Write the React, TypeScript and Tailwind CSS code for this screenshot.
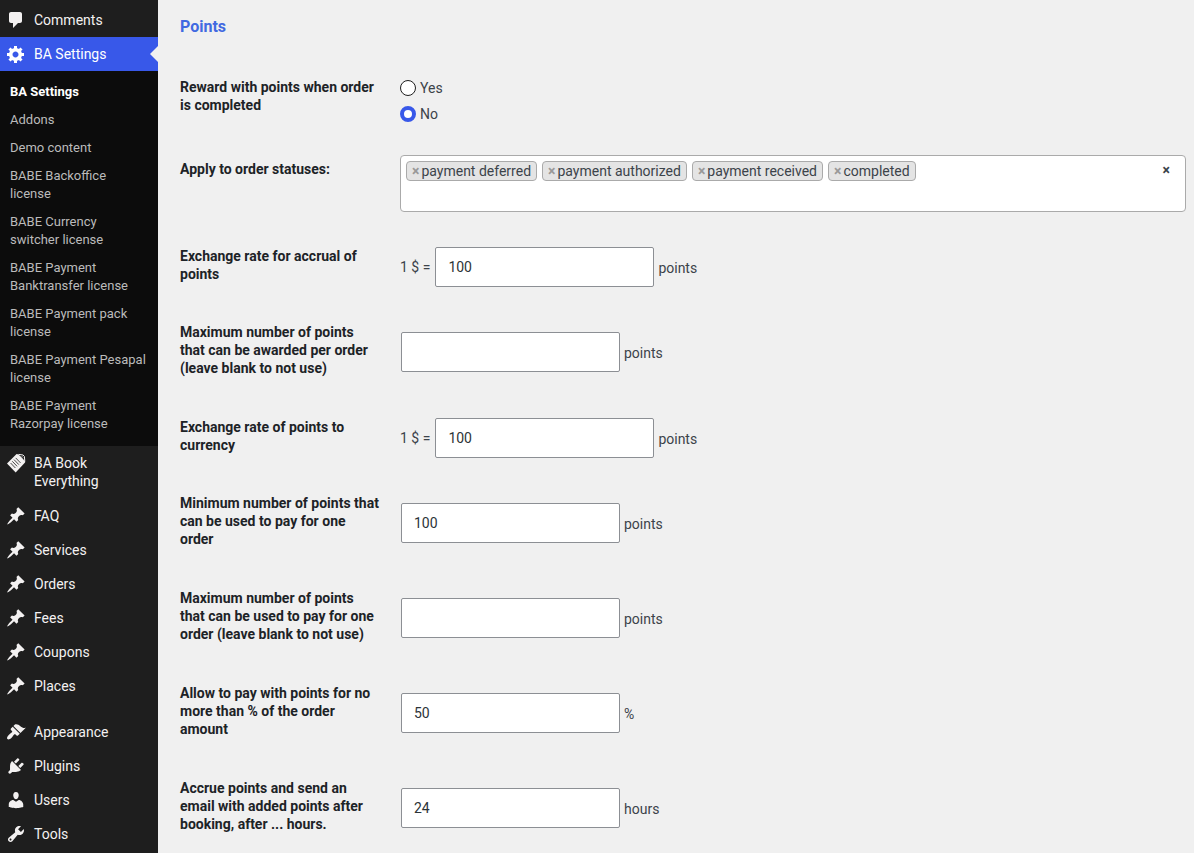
import { useState } from 'react';
import type { ReactNode } from 'react';
import clsx from 'clsx';

const ICONS = {
  comments: 'M5 2h9c1.1 0 2 .9 2 2v7c0 1.1-.9 2-2 2h-2l-5 5v-5H5c-1.1 0-2-.9-2-2V4c0-1.1.9-2 2-2z',
  generic:
    'M18 12h-2.18c-.17.7-.44 1.35-.81 1.93l1.54 1.54-2.1 2.1-1.54-1.54c-.58.36-1.23.63-1.91.79V19H8v-2.18c-.68-.16-1.33-.43-1.91-.79l-1.54 1.54-2.12-2.12 1.54-1.54c-.36-.58-.63-1.23-.79-1.91H1V9.03h2.17c.16-.7.44-1.35.8-1.94L2.43 5.55l2.1-2.1 1.54 1.54c.58-.37 1.24-.64 1.93-.81V2h3v2.18c.68.16 1.33.43 1.91.79l1.54-1.54 2.12 2.12-1.54 1.54c.36.59.64 1.24.8 1.94H18V12zm-8.5 1.5c1.66 0 3-1.34 3-3s-1.34-3-3-3-3 1.34-3 3 1.34 3 3 3z',
  post: 'M10.44 3.02l1.82-1.82 6.36 6.35-1.83 1.82c-1.05-.68-2.48-.57-3.41.36l-.75.75c-.92.93-1.04 2.35-.35 3.41l-1.83 1.82-2.41-2.41-2.8 2.79c-.42.42-3.38 2.71-3.8 2.29s1.86-3.39 2.28-3.81l2.79-2.79L4.1 9.36l1.83-1.82c1.05.69 2.48.57 3.4-.36l.75-.75c.93-.92 1.05-2.35.36-3.41z',
  appearance:
    'M14.48 11.06L7.41 3.99l1.5-1.5c.5-.56 2.3-.47 3.51.32 1.21.8 1.43 1.28 2.91 2.1 1.18.64 2.45 1.26 4.45.85zm-.71.71L6.7 4.7 4.93 6.47c-.39.39-.39 1.02 0 1.41l1.06 1.06c.39.39.39 1.03 0 1.42-.6.6-1.43 1.11-2.21 1.69-.35.26-.7.53-1.01.84C1.43 14.23.4 16.08 1.4 17.07c.99 1 2.84-.03 4.18-1.36.31-.31.58-.66.85-1.02.57-.78 1.08-1.61 1.69-2.21.39-.39 1.02-.39 1.41 0l1.06 1.06c.39.39 1.02.39 1.41 0z',
  plugins:
    'M13.11 4.36L9.87 7.6 8 5.73l3.24-3.24c.35-.34 1.05-.2 1.56.32.52.51.66 1.21.31 1.55zm-8 1.77l.91-1.12 9.01 9.01-1.19.84c-.71.71-2.63 1.16-3.82 1.16H6.14L4.9 17.26c-.59.59-1.54.59-2.12 0-.59-.58-.59-1.53 0-2.12l1.24-1.24v-3.88c0-1.13.4-3.19 1.09-3.89zm7.26 3.97l3.24-3.24c.34-.35 1.04-.21 1.55.31.52.51.66 1.21.31 1.55l-3.24 3.25z',
  users:
    'M10 9.25c-2.27 0-2.73-3.44-2.73-3.44C7 4.02 7.82 2 9.97 2c2.16 0 2.98 2.02 2.71 3.81 0 0-.41 3.44-2.68 3.44zm0 2.57L12.72 10c2.39 0 4.52 2.33 4.52 4.53v2.49s-3.65 1.13-7.24 1.13c-3.65 0-7.24-1.13-7.24-1.13v-2.49c0-2.25 1.94-4.48 4.47-4.48z',
  tools:
    'M16.68 9.77c-1.34 1.34-3.3 1.67-4.95.99l-5.41 6.52c-.99.99-2.59.99-3.58 0s-.99-2.59 0-3.57l6.52-5.42c-.68-1.65-.35-3.61.99-4.95 1.28-1.28 3.12-1.62 4.72-1.06l-2.89 2.89 2.82 2.82 2.86-2.87c.53 1.58.18 3.39-1.08 4.65zM3.81 16.21c.4.39 1.04.39 1.43 0 .4-.4.4-1.04 0-1.43-.39-.4-1.03-.4-1.43 0-.39.39-.39 1.03 0 1.43z',
};

type IconName = keyof typeof ICONS | 'book';

const SUBMENU = [
  'BA Settings',
  'Addons',
  'Demo content',
  'BABE Backoffice license',
  'BABE Currency switcher license',
  'BABE Payment Banktransfer license',
  'BABE Payment pack license',
  'BABE Payment Pesapal license',
  'BABE Payment Razorpay license',
];

const POST_TYPES = ['FAQ', 'Services', 'Orders', 'Fees', 'Coupons', 'Places'];

function MenuIcon({ name }: { name: IconName }) {
  if (name === 'book') {
    return (
      <svg viewBox="0 0 20 20" className="-my-px size-5 shrink-0" fill="none" aria-hidden="true">
        <path d="M1 10.6L10.6 1l2 .6 6.6 6.8-.2 1L9.7 19.4z" fill="#f3f1f1" />
        <path d="M12.6 1.4l4.4.6 1.4 1.4.4 5" stroke="#f3f1f1" strokeWidth="1" />
        <path d="M13.8 3.2l3.4 3.6M15.8 3.2l1.2 1.2" stroke="#f3f1f1" strokeWidth=".8" />
        <path
          d="M4.6 10l4.8 5M6.3 8.3l4.8 5M8 6.6l4.8 5M9.7 4.9l4.8 5"
          stroke="#1e1e1e"
          strokeWidth=".8"
        />
      </svg>
    );
  }
  return (
    <svg viewBox="0 0 20 20" className="-my-px size-5 shrink-0" aria-hidden="true">
      <path d={ICONS[name]} fill="currentColor" />
    </svg>
  );
}

function MenuItem({ icon, label, active }: { icon: IconName; label: string; active?: boolean }) {
  return (
    <a
      href="#"
      className={clsx(
        'relative flex gap-2 py-2 pr-2 pl-1.5 text-[14px] leading-[18px]',
        active ? 'bg-[#3858e9] text-white' : 'text-[#f3f1f1]'
      )}
    >
      <MenuIcon name={icon} />
      <span>{label}</span>
      {active && (
        <span className="absolute top-1/2 right-0 -translate-y-1/2 border-8 border-l-0 border-transparent border-r-[#f0f0f0]" />
      )}
    </a>
  );
}

function Sidebar() {
  return (
    <nav className="w-[158px] shrink-0 bg-[#1e1e1e] pt-[3px]">
      <MenuItem icon="comments" label="Comments" />
      <MenuItem icon="generic" label="BA Settings" active />
      <ul className="bg-[#0c0c0c] pt-[7px] pb-2">
        {SUBMENU.map((label, i) => (
          <li key={label}>
            <a
              href="#"
              className={clsx(
                'block px-2.5 py-[5px] text-[13px] leading-[18px]',
                i === 0 ? 'font-bold text-white' : 'text-[#bbb]'
              )}
            >
              {label}
            </a>
          </li>
        ))}
      </ul>
      <MenuItem icon="book" label="BA Book Everything" />
      <div className="pt-px pb-3">
        {POST_TYPES.map((label) => (
          <MenuItem key={label} icon="post" label={label} />
        ))}
      </div>
      <MenuItem icon="appearance" label="Appearance" />
      <MenuItem icon="plugins" label="Plugins" />
      <MenuItem icon="users" label="Users" />
      <MenuItem icon="tools" label="Tools" />
    </nav>
  );
}

function Row({ title, htmlFor, children }: { title: string; htmlFor?: string; children: ReactNode }) {
  return (
    <div className="grid grid-cols-[200px_1fr] gap-x-5">
      <div className="py-5 leading-[18px] font-bold text-[#1d2327]">
        {htmlFor ? <label htmlFor={htmlFor}>{title}</label> : title}
      </div>
      {children}
    </div>
  );
}

function NumberRow({
  id,
  title,
  value = '',
  prefix,
  unit = 'points',
}: {
  id: string;
  title: string;
  value?: string;
  prefix?: string;
  unit?: string;
}) {
  return (
    <Row title={title} htmlFor={id}>
      <div className={clsx('flex items-center gap-1', prefix ? 'pt-1' : 'min-h-[95px] pt-[3px]')}>
        {prefix && <span>{prefix}</span>}
        <input
          id={id}
          type="text"
          defaultValue={value}
          className="ml-px h-10 w-[219px] rounded-xs border border-[#8c8f94] bg-white px-3 text-[#2c3338]"
        />
        <span className="pt-0.5">{unit}</span>
      </div>
    </Row>
  );
}

function RewardRadio() {
  const [reward, setReward] = useState('No');
  return (
    <div className="flex flex-col gap-2 pt-[21px] pb-[17px]">
      {['Yes', 'No'].map((option) => (
        <label key={option} className="flex items-center gap-1 leading-[18px]">
          <input
            type="radio"
            name="reward"
            checked={reward === option}
            onChange={() => setReward(option)}
            className="size-4 appearance-none rounded-full border border-[#1e1e1e] bg-white checked:border-4 checked:border-[#3858e9]"
          />
          {option}
        </label>
      ))}
    </div>
  );
}

function StatusSelect() {
  const [statuses, setStatuses] = useState([
    'payment deferred',
    'payment authorized',
    'payment received',
    'completed',
  ]);
  return (
    <div className="py-[15px]">
      <div className="flex min-h-[57px] items-start rounded border border-[#aaa] bg-white px-[5px] pt-[5px]">
        <ul className="flex flex-1 flex-wrap gap-[5px]">
          {statuses.map((status) => (
            <li
              key={status}
              className="flex h-5 items-center gap-0.5 rounded border border-[#aaa] bg-[#e4e4e4] px-[5px]"
            >
              <button
                type="button"
                aria-label={`Remove ${status}`}
                onClick={() => setStatuses(statuses.filter((s) => s !== status))}
                className="font-bold text-[#999]"
              >
                ×
              </button>
              {status}
            </li>
          ))}
        </ul>
        <button
          type="button"
          aria-label="Remove all items"
          onClick={() => setStatuses([])}
          className="mr-2.5 leading-[18px] font-bold"
        >
          ×
        </button>
      </div>
    </div>
  );
}

export default function App() {
  return (
    <div className="flex min-h-screen bg-[#f0f0f0] font-[Roboto,sans-serif] text-[14px] leading-5 text-[#3c434a]">
      <Sidebar />
      <main className="min-w-0 flex-1 pt-[17px] pr-2 pl-[22px]">
        <h2 className="mb-[21px] text-[16px] leading-5 font-bold text-[#4169e1]">Points</h2>
        <form>
          <Row title="Reward with points when order is completed">
            <RewardRadio />
          </Row>
          <Row title="Apply to order statuses:">
            <StatusSelect />
          </Row>
          <NumberRow id="accrual-rate" title="Exchange rate for accrual of points" prefix="1 $ =" value="100" />
          <NumberRow id="max-award" title="Maximum number of points that can be awarded per order (leave blank to not use)" />
          <NumberRow id="currency-rate" title="Exchange rate of points to currency" prefix="1 $ =" value="100" />
          <NumberRow id="min-use" title="Minimum number of points that can be used to pay for one order" value="100" />
          <NumberRow id="max-use" title="Maximum number of points that can be used to pay for one order (leave blank to not use)" />
          <NumberRow
            id="max-percent"
            title="Allow to pay with points for no more than % of the order amount"
            value="50"
            unit="%"
          />
          <NumberRow
            id="accrue-after"
            title="Accrue points and send an email with added points after booking, after ... hours."
            value="24"
            unit="hours"
          />
        </form>
      </main>
    </div>
  );
}
